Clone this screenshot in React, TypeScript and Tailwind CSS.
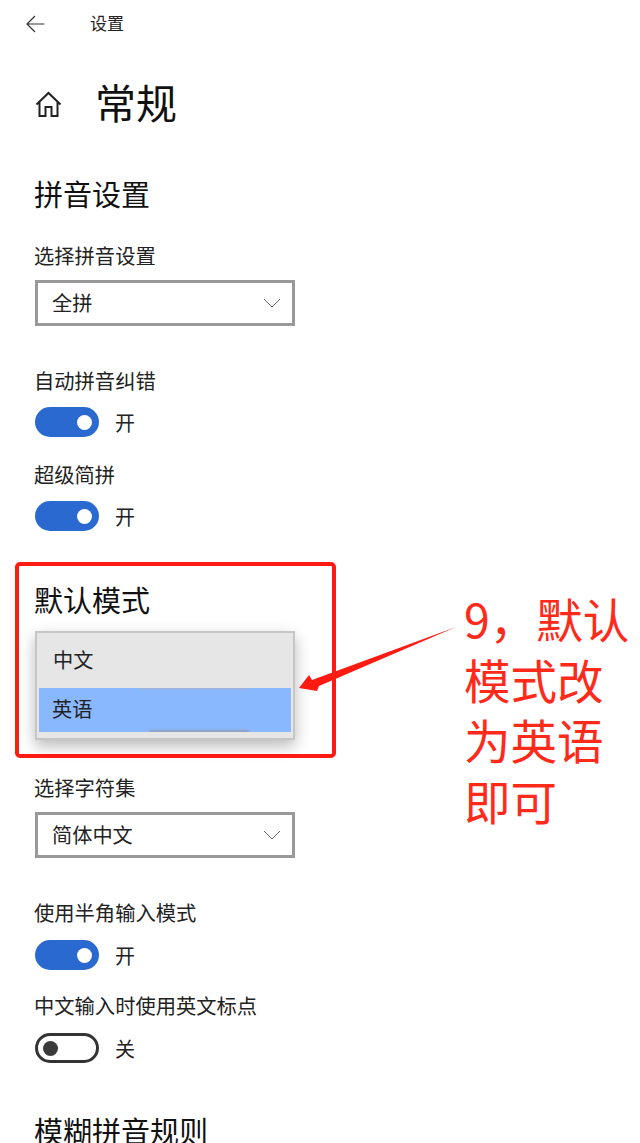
import React from "react";

const cjk = { fontFamily: '"Noto Sans CJK SC", "Noto Sans", sans-serif' };

function Chevron() {
  return (
    <svg width="18" height="10" viewBox="0 0 18 10" fill="none" className="ml-auto mr-[1px]">
      <path d="M1 1 L9 9 L17 1" stroke="#666" strokeWidth="1" />
    </svg>
  );
}

function Select({ value, mt }: { value: string; mt: string }) {
  return (
    <div className={`${mt} flex h-[46px] w-[260px] items-center border-[3px] border-[#999999] bg-white pl-[14px] pr-[10px] text-[20.2px] text-[#222]`}>
      <span>{value}</span>
      <Chevron />
    </div>
  );
}

function Label({ text, mt }: { text: string; mt: string }) {
  return <div className={`${mt} -ml-[1px] h-[24px] text-[20.3px] leading-[22px] text-[#222]`}>{text}</div>;
}

function Heading({ text, mt, last }: { text: string; mt: string; last?: boolean }) {
  return (
    <div className={`${mt} -ml-[1px] h-[40px] text-[29px] text-[#111] ${last ? "leading-[40px]" : "leading-[36px]"}`}>
      {text}
    </div>
  );
}

function Toggle({ on, mt }: { on: boolean; mt: string }) {
  return (
    <div className={`${mt} flex h-[30px] items-center gap-[16px]`}>
      {on ? (
        <div className="flex h-[30px] w-[64px] items-center justify-end rounded-full bg-[#2a6ad0] pr-[7px]">
          <div className="h-[15px] w-[15px] rounded-full bg-white" />
        </div>
      ) : (
        <div className="flex h-[30px] w-[64px] items-center rounded-full border-[3px] border-[#333333] bg-white pl-[5px]">
          <div className="h-[15px] w-[15px] rounded-full bg-[#3a3a3a]" />
        </div>
      )}
      <span className="mt-[2px] text-[20px] leading-[30px] text-[#222]">{on ? "开" : "关"}</span>
    </div>
  );
}

export default function App() {
  return (
    <div className="relative h-[1143px] w-[640px] overflow-hidden bg-white" style={cjk}>
      <div className="flex h-[48px] items-center pl-[26px]">
        <svg width="19" height="18" viewBox="0 0 19 18" fill="none">
          <path d="M9 1 L1 9 L9 17 M1 9 H18.5" stroke="#333" strokeWidth="1.2" />
        </svg>
        <span className="mb-[2px] ml-[45px] text-[17px] text-[#222]">设置</span>
      </div>

      <div className="px-[35px]">
        <div className="mt-[25px] flex h-[60px] items-start">
          <svg width="27" height="27" viewBox="0 0 27 27" fill="none" className="mt-[18px]">
            <path
              d="M1.5 13.5 L13.5 2 L25.5 13.5 M4.5 11 V25 H10.5 V16 H16.5 V25 H22.5 V11"
              stroke="#222"
              strokeWidth="2"
            />
          </svg>
          <span className="ml-[33px] text-[41px] leading-[56px] text-[#111]">常规</span>
        </div>

        <Heading text="拼音设置" mt="mt-[42px]" />
        <Label text="选择拼音设置" mt="mt-[29px]" />
        <Select value="全拼" mt="mt-[12px]" />
        <Label text="自动拼音纠错" mt="mt-[43px]" />
        <Toggle on mt="mt-[14px]" />
        <Label text="超级简拼" mt="mt-[26px]" />
        <Toggle on mt="mt-[14px]" />

        <Heading text="默认模式" mt="mt-[50px]" />
        <div className="mt-[10px] h-[109px] w-[260px] border-2 border-[#c6c6c6] bg-[#e6e6e6] pt-[55px] text-[20.2px] text-[#222] shadow-[0_6px_14px_rgba(0,0,0,0.28)]">
          <div className="relative mx-[2px] flex h-[44px] items-center overflow-hidden bg-[#8ab8ff] pb-[2px] pl-[13px]">
            <span>英语</span>
            <div className="absolute left-[100px] top-[-1px] h-[2px] w-[110px] rounded-full bg-[#a9b4c8] blur-[1px]" />
            <div className="absolute bottom-[-1px] left-[110px] h-[3px] w-[100px] rounded-full bg-[#8d9db8] blur-[1px]" />
          </div>
        </div>

        <Label text="选择字符集" mt="mt-[36px]" />
        <Select value="简体中文" mt="mt-[12px]" />
        <Label text="使用半角输入模式" mt="mt-[43px]" />
        <Toggle on mt="mt-[15px]" />
        <Label text="中文输入时使用英文标点" mt="mt-[24px]" />
        <Toggle on={false} mt="mt-[15px]" />
        <Heading text="模糊拼音规则" mt="mt-[47px]" last />
      </div>

      {/* Overlays */}
      <div className="absolute left-[53px] top-[645px] text-[20.2px] leading-[30px] text-[#222]">中文</div>
      <div className="absolute left-[15px] top-[562px] h-[196px] w-[321px] rounded-[5px] border-[4px] border-[#ff1a12]" />
      <svg className="absolute left-[296px] top-[624px]" width="164" height="70" viewBox="0 0 164 70" fill="none">
        <path d="M160 3 L16 56 L13 51 L3 64 L21 67 L23 62 Z" fill="#ff1a12" />
      </svg>
      <div className="absolute left-[464px] top-[588px] w-[176px] text-[46.5px] leading-[60.5px] text-[#ff2a1a]">
        <div>9，默认</div>
        <div>模式改</div>
        <div>为英语</div>
        <div>即可</div>
      </div>
    </div>
  );
}
